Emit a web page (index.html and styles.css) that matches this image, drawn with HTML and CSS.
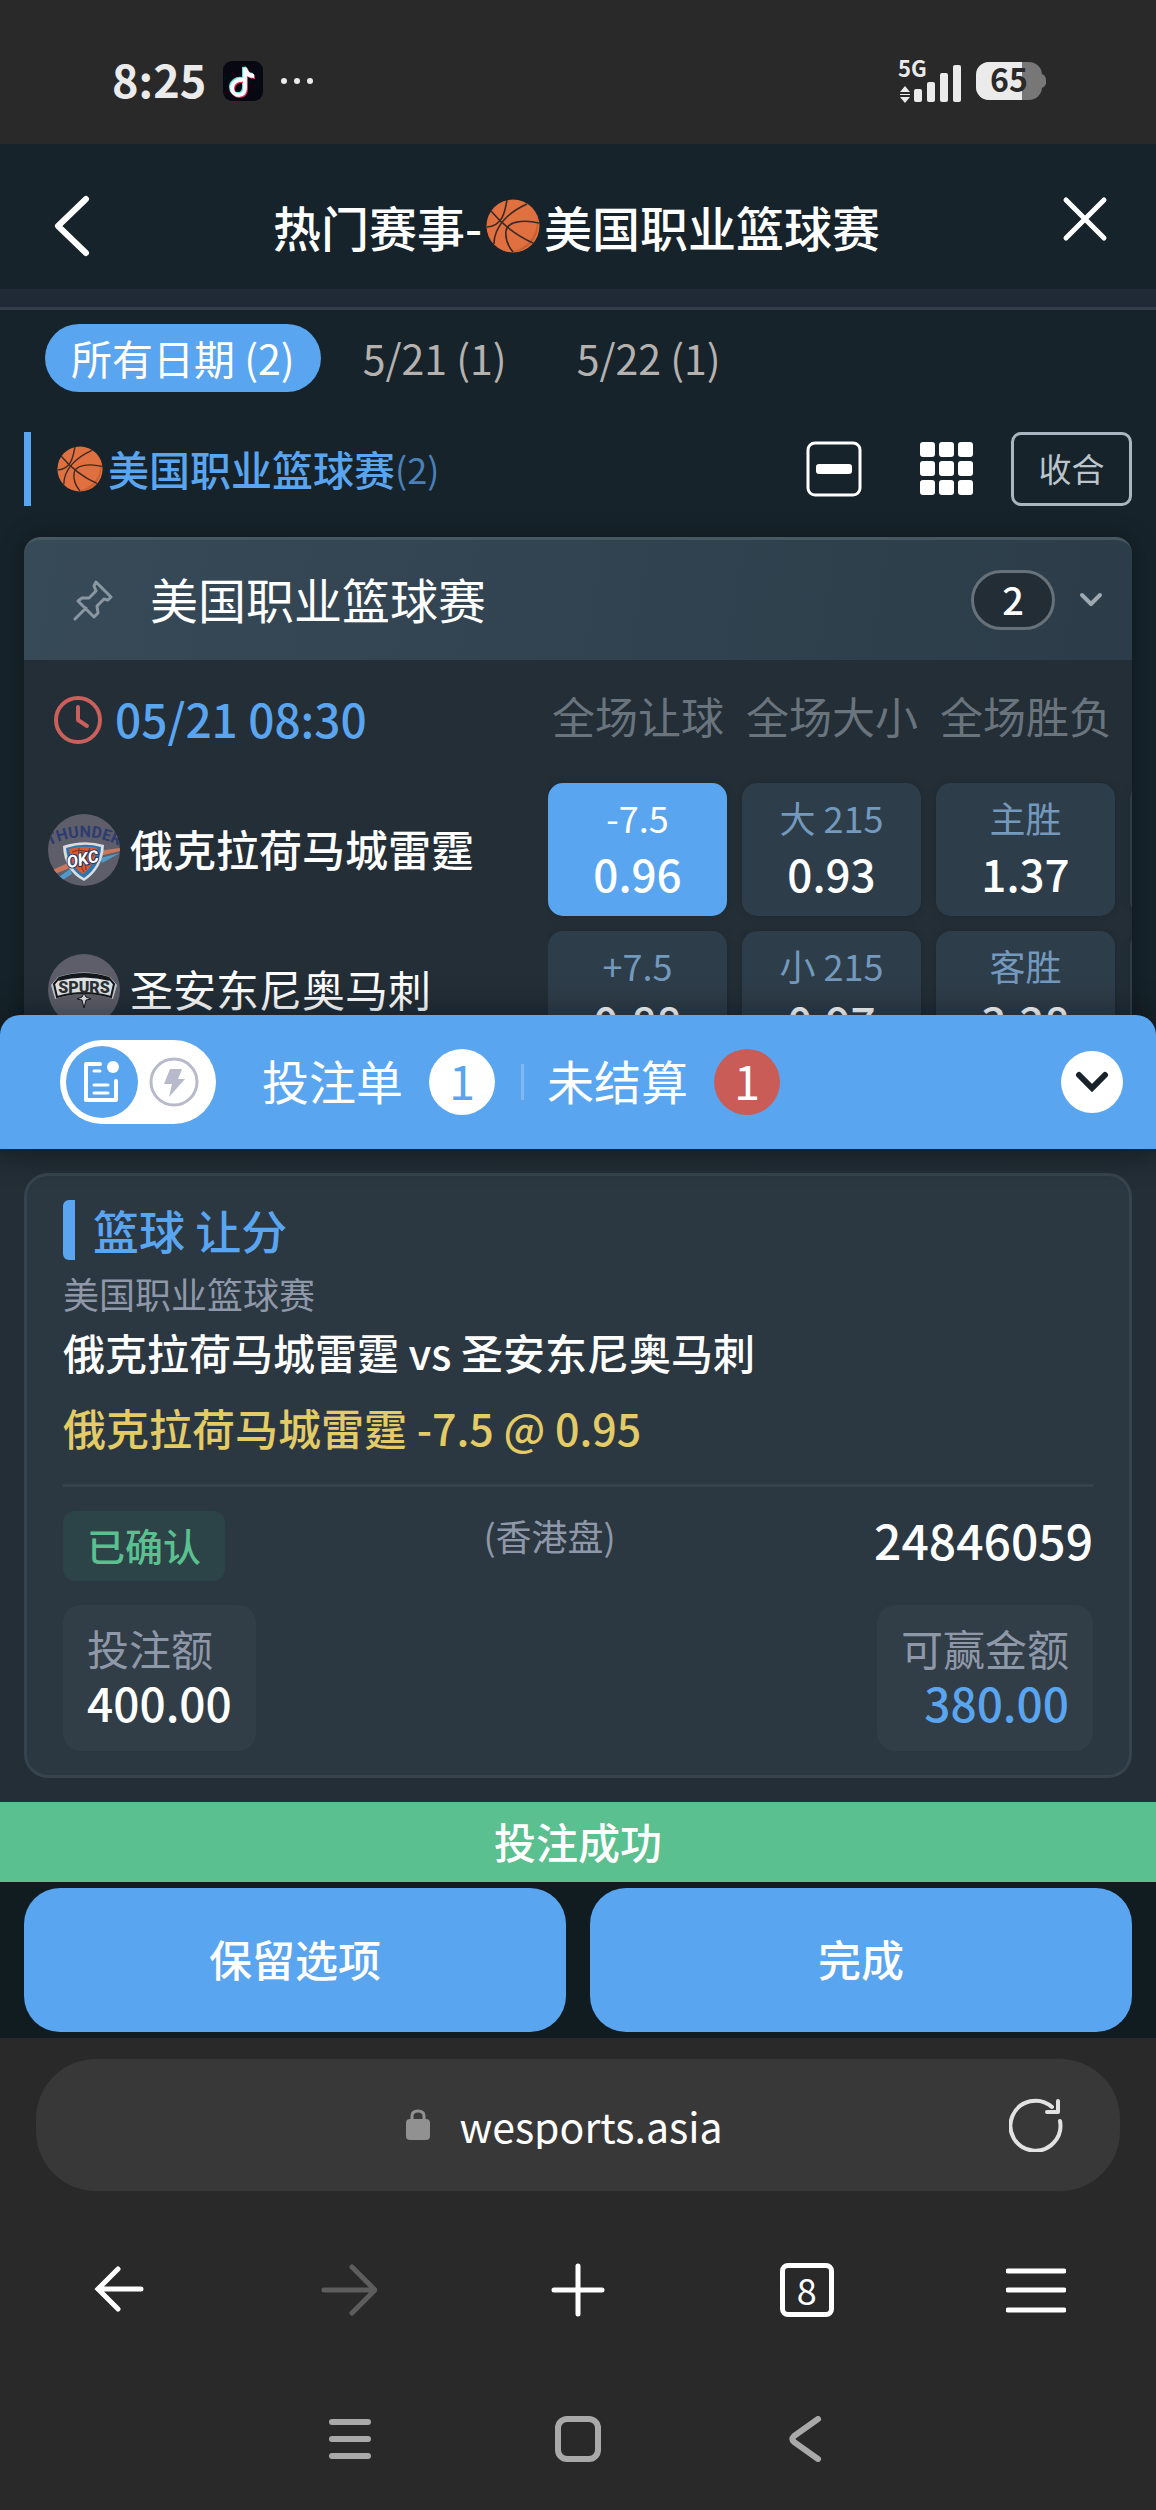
FILE: index.html
```html
<!DOCTYPE html>
<html lang="zh-CN">
<head>
  <meta charset="UTF-8" />
  <meta name="viewport" content="width=device-width, initial-scale=1.0"/>
  <title>热门赛事-美国职业篮球赛</title>
  <link rel="stylesheet" href="styles.css">
</head>
<body>
  <!-- shared icons -->
  <svg width="0" height="0" class="defs" aria-hidden="true">
    <symbol id="ball" viewBox="0 0 54 54">
      <circle cx="27" cy="27" r="26.500" fill="#e0703f"/>
      <path d="M51 17c5 19-8 37-27 36 17-3 29-17 27-36z" fill="#c95f30"/>
      <g fill="none" stroke="#3a2a24" stroke-width="1.600">
        <path d="M21 1C19 12 17 27 1 28"/>
        <path d="M5 12c10 12 24 24 42 32"/>
        <path d="M41 5C23 13 8 27 8 45"/>
        <path d="M53 24C36 20 21 23 20 32c-1 8 2 15 7 21"/>
      </g>
    </symbol>
  </svg>

  <!-- phone status bar -->
  <div class="status-bar">
    <div class="status-left">
      <span class="clock">8:25</span>
      <svg width="40" height="40" viewBox="0 0 40 40">
        <rect width="40" height="40" rx="9" fill="#070812"/>
        <g fill="none" stroke-width="4">
          <path d="M19 18c-6-1-11 3-11 8 0 4 3 7 7 7s6-3 6-7V6c1 5 4 8 9 8" stroke="#4be8e4"/>
          <path d="M21 20c-6-1-11 3-11 8 0 4 3 7 7 7s6-3 6-7V8c1 5 4 8 9 8" stroke="#ee2c54"/>
          <path d="M20 19c-6-1-11 3-11 8 0 4 3 7 7 7s6-3 6-7V7c1 5 4 8 9 8" stroke="#ffffff"/>
        </g>
      </svg>
      <svg width="34" height="8" viewBox="0 0 34 8" fill="#ebebeb">
        <circle cx="4" cy="4" r="3"/><circle cx="17" cy="4" r="3"/><circle cx="30" cy="4" r="3"/>
      </svg>
    </div>
    <div class="status-right">
      <svg width="64" height="44" viewBox="0 0 64 44" fill="#ebebeb">
        <text x="0" y="18" class="net">5G</text>
        <path d="M7 27l5 6H2zM7 44l-5-6h10zM2 35h10v1H2z"/>
        <rect x="16" y="30" width="8" height="13" rx="2"/>
        <rect x="29" y="23" width="8" height="20" rx="2"/>
        <rect x="42" y="14" width="8" height="29" rx="2"/>
        <rect x="55" y="6" width="8" height="37" rx="2"/>
      </svg>
      <svg width="70" height="38" viewBox="0 0 70 38">
        <path d="M65 12c7 0 7 14 0 14z" fill="#777777"/>
        <rect width="66" height="38" rx="13" fill="#777777"/>
        <path d="M13 0h33v38H13A13 13 0 0 1 0 25V13A13 13 0 0 1 13 0z" fill="#ebebeb"/>
        <text x="33" y="30" class="battery">65</text>
      </svg>
    </div>
  </div>

  <header class="topbar">
    <button class="icon-btn" aria-label="返回">
      <svg width="38" height="62" viewBox="0 0 38 62"><path d="M33 4L5 31l28 27" fill="none" stroke="#fff" stroke-width="6" stroke-linecap="round" stroke-linejoin="round"/></svg>
    </button>
    <h1>热门赛事-<svg width="54" height="54"><use href="#ball"/></svg>美国职业篮球赛</h1>
    <button class="icon-btn close" aria-label="关闭">
      <svg width="46" height="46" viewBox="0 0 46 46"><path d="M4 4l38 38M42 4L4 42" stroke="#fff" stroke-width="5" stroke-linecap="round"/></svg>
    </button>
  </header>
  <div class="strip"></div>

  <main class="matches">
    <nav class="dates">
      <button class="active">所有日期 (2)</button>
      <button>5/21 (1)</button>
      <button>5/22 (1)</button>
    </nav>

    <div class="league-bar">
      <h2><svg width="46" height="46"><use href="#ball"/></svg>美国职业篮球赛<small>(2)</small></h2>
      <div class="tools">
        <button class="icon-btn" aria-label="精简">
          <svg width="56" height="56" viewBox="0 0 56 56"><rect x="2" y="2" width="52" height="52" rx="7" fill="none" stroke="#fff" stroke-width="3"/><rect x="10" y="23" width="36" height="10" rx="3" fill="#fff"/></svg>
        </button>
        <button class="icon-btn" aria-label="宫格">
          <svg width="56" height="56" viewBox="0 0 56 56" fill="#fff">
            <rect x="1" y="1" width="15" height="15" rx="3"/><rect x="20" y="1" width="15" height="15" rx="3"/><rect x="39" y="1" width="15" height="15" rx="3"/>
            <rect x="1" y="20" width="15" height="15" rx="3"/><rect x="20" y="20" width="15" height="15" rx="3"/><rect x="39" y="20" width="15" height="15" rx="3"/>
            <rect x="1" y="39" width="15" height="15" rx="3"/><rect x="20" y="39" width="15" height="15" rx="3"/><rect x="39" y="39" width="15" height="15" rx="3"/>
          </svg>
        </button>
        <button class="collapse">收合</button>
      </div>
    </div>

    <section class="league-card">
      <div class="league-head">
        <svg width="42" height="42" viewBox="0 0 42 42"><path d="M24 3l15 15-3 3-4-1-7 7 1 7-4 4L6 22l4-3 7 0 7-7-2-5zM14 29L3 40" fill="none" stroke="#8b97a0" stroke-width="3" stroke-linejoin="round" stroke-linecap="round"/></svg>
        <h3>美国职业篮球赛</h3>
        <span class="count">2</span>
        <svg width="24" height="16" viewBox="0 0 24 16"><path d="M3 3l9 9 9-9" fill="none" stroke="#a0a9b0" stroke-width="4" stroke-linecap="round" stroke-linejoin="round"/></svg>
      </div>

      <div class="match">
        <div class="match-info">
          <div class="match-time">
            <svg width="48" height="48" viewBox="0 0 48 48" fill="none" stroke="#c9605b" stroke-width="4"><circle cx="24" cy="24" r="22"/><path d="M24 11v13l9 6" stroke-linecap="round" stroke-linejoin="round"/></svg>
            <time>05/21 08:30</time>
          </div>
          <div class="team home">
            <svg width="72" height="72" viewBox="0 0 72 72">
              <defs>
                <clipPath id="round"><circle cx="36" cy="36" r="36"/></clipPath>
                <path id="arch" d="M1 32Q36 14 71 32"/>
              </defs>
              <circle cx="36" cy="36" r="36" fill="#5d5e69"/>
              <g clip-path="url(#round)">
                <text class="logo-arch" fill="#2c3b70"><textPath href="#arch" startOffset="50%">THUNDER</textPath></text>
                <path d="M50 37l22-3v3l-20 5zM20 49L2 57l2 4 18-7z" fill="#c9785c"/>
                <path d="M52 44l20-5-18 10zM22 55L8 65l2 4 14-9z" fill="#5199c9"/>
                <path d="M15 32q21-7 41-1-1 24-20 36Q16 57 15 32z" fill="#d8dde4"/>
                <path d="M18 34q18-6 35-1-1 20-17 31Q20 55 18 34z" fill="#2f75ad"/>
                <path d="M21 35q14-4 28-1-2 17-14 26Q23 53 21 35z" fill="#d85a32"/>
                <path d="M24 38q11-5 22 4M31 34q-2 13 5 24M42 34q-6 10-4 22" fill="none" stroke="#7d3328"/>
                <text x="35" y="51" class="logo-okc" transform="rotate(-12 35 47)">OKC</text>
              </g>
            </svg>
            <span>俄克拉荷马城雷霆</span>
          </div>
          <div class="team">
            <svg width="72" height="72" viewBox="0 0 72 72">
              <circle cx="36" cy="36" r="36" fill="#5d5e69"/>
              <path d="M10 23q26-9 52 0l7 8-4 14q-29-10-58 0L3 31z" fill="#bfc6c9"/>
              <path d="M11 24q25-8 50 0l5 6-3 13q-27-8-54 0L6 30z" fill="#dfe3e4" stroke="#15181c" stroke-width="2"/>
              <path d="M12 24q24-8 48 0l2 3q-26-7-52 0z" fill="#15181c"/>
              <path d="M36 39l-2 4-5 2 5 1 2 8 2-8 5-1-5-2z" fill="#dfe3e4" stroke="#15181c"/>
              <text x="36" y="39" class="logo-spurs">SPURS</text>
            </svg>
            <span>圣安东尼奥马刺</span>
          </div>
        </div>

        <div class="markets">
          <span class="market-name">全场让球</span>
          <span class="market-name">全场大小</span>
          <span class="market-name">全场胜负</span>
          <span class="market-name"></span>
          <button class="odd selected"><small>-7.5</small>0.96</button>
          <button class="odd"><small>大 215</small>0.93</button>
          <button class="odd"><small>主胜</small>1.37</button>
          <button class="odd" aria-label="更多"></button>
          <button class="odd"><small>+7.5</small>0.88</button>
          <button class="odd"><small>小 215</small>0.97</button>
          <button class="odd"><small>客胜</small>3.28</button>
          <button class="odd" aria-label="更多"></button>
        </div>
      </div>
    </section>
  </main>

  <!-- bet slip, slides over the match list -->
  <section class="slip">
    <div class="slip-bar">
      <div class="mode">
        <button class="on" aria-label="投注单">
          <svg width="40" height="48" viewBox="0 0 40 48" fill="none" stroke="#fff" stroke-width="4" stroke-linecap="round" stroke-linejoin="round">
            <path d="M18 6H4v36h30V23"/><path d="M12 13h6M12 27h14M12 35h14" stroke-width="3"/><circle cx="31" cy="9" r="6" fill="#fff" stroke="none"/>
          </svg>
        </button>
        <button aria-label="快速投注">
          <svg width="50" height="50" viewBox="0 0 50 50"><circle cx="25" cy="25" r="23" fill="none" stroke="#b8bacb" stroke-width="3"/><path d="M21 12h12l-4 10h7L20 40l3-13h-8z" fill="#b8bacb"/></svg>
        </button>
      </div>
      <a href="#slip" class="slip-tab"><span class="label">投注单</span> <span class="num">1</span></a>
      <a href="#open" class="slip-tab"><span class="label">未结算</span> <span class="num red">1</span></a>
      <button class="fold" aria-label="收起">
        <svg width="34" height="22" viewBox="0 0 34 22"><path d="M4 4l13 13L30 4" fill="none" stroke="#18232b" stroke-width="6" stroke-linecap="round"/></svg>
      </button>
    </div>

    <div class="slip-body">
      <article class="bet">
        <h3>篮球 让分</h3>
        <p class="bet-league">美国职业篮球赛</p>
        <p class="bet-teams">俄克拉荷马城雷霆 vs 圣安东尼奥马刺</p>
        <p class="bet-pick">俄克拉荷马城雷霆 -7.5 @ 0.95</p>
        <div class="bet-state">
          <span class="confirmed">已确认</span>
          <span class="odds-type">(香港盘)</span>
          <span class="bet-id">24846059</span>
        </div>
        <div class="bet-sums">
          <div class="sum">投注额<strong>400.00</strong></div>
          <div class="sum win">可赢金额<strong>380.00</strong></div>
        </div>
      </article>
    </div>

    <div class="success">投注成功</div>
    <div class="actions">
      <button>保留选项</button>
      <button>完成</button>
    </div>
  </section>

  <!-- browser chrome -->
  <footer class="browser">
    <div class="url-bar">
      <div class="address">
        <svg width="24" height="32" viewBox="0 0 24 32"><rect y="10" width="24" height="21" rx="4" fill="#919191"/><path d="M6 12V7q0-5 6-5t6 5v5" fill="none" stroke="#919191" stroke-width="3"/></svg>
        <input type="text" value="wesports.asia" aria-label="网址">
      </div>
      <button class="icon-btn" aria-label="刷新">
        <svg width="54" height="54" viewBox="0 0 54 54" fill="none" stroke="#e2e2e2" stroke-width="4" stroke-linecap="round"><path d="M51 23a25 25 0 1 1-8-14"/><path d="M49 3v11H38" stroke-linejoin="round"/></svg>
      </button>
    </div>
    <nav class="browser-nav">
      <button class="icon-btn" aria-label="后退"><svg width="56" height="56" viewBox="0 0 56 56"><path d="M49 27H6M26 7L6 27l20 20"/></svg></button>
      <button class="icon-btn off" aria-label="前进"><svg width="56" height="56" viewBox="0 0 56 56"><path d="M3 28h51M31 5l23 23-23 23"/></svg></button>
      <button class="icon-btn" aria-label="新标签"><svg width="56" height="56" viewBox="0 0 56 56"><path d="M28 4v48M4 28h48"/></svg></button>
      <button class="icon-btn tabs" aria-label="标签页">8</button>
      <button class="icon-btn" aria-label="菜单"><svg width="60" height="56" viewBox="0 0 60 56"><path d="M2 9h56M2 28h56M2 48h56"/></svg></button>
    </nav>
    <nav class="system-nav">
      <button class="icon-btn" aria-label="任务"><svg width="44" height="46" viewBox="0 0 44 46"><path d="M4 6h36M4 23h36M4 40h36"/></svg></button>
      <button class="icon-btn" aria-label="主页"><svg width="46" height="46" viewBox="0 0 46 46"><rect x="3" y="3" width="40" height="40" rx="9"/></svg></button>
      <button class="icon-btn" aria-label="系统返回"><svg width="46" height="46" viewBox="0 0 46 46"><path d="M35 3L11 20q-3 3 0 6l24 17"/></svg></button>
    </nav>
  </footer>
</body>
</html>
```
FILE: styles.css
```css
:root {
  --blue: #5aa5f0;
  --page: #16232a;
  --panel: #232e37;
  --chrome: #292929;
  --muted: #8f98a8;
  --green: #5ac08f;
}

* {
  box-sizing: border-box;
  margin: 0;
  padding: 0;
}

body {
  font-family: "Noto Sans CJK SC", "Noto Sans", sans-serif;
  background: var(--chrome);
  color: #fff;
  font-size: 42px;
  line-height: 48px;
  overflow-x: hidden;
}

button, input {
  font: inherit;
  color: inherit;
  background: none;
  border: none;
}

button {
  cursor: pointer;
}

svg {
  display: block;
  flex: none;
}

.defs {
  position: absolute;
}

.icon-btn {
  display: flex;
  align-items: center;
  justify-content: center;
}

/* status bar */
.status-bar {
  display: flex;
  justify-content: space-between;
  height: 144px;
  padding: 18px 110px 0 112px;
}

.status-left, .status-right {
  display: flex;
  align-items: center;
  gap: 17px;
}

.status-right {
  gap: 14px;
}

.clock {
  padding-bottom: 4px;
  font-size: 45px;
  font-weight: 700;
  color: #ebebeb;
}

.net {
  font-size: 22px;
  font-weight: 700;
}

.battery {
  font-size: 32px;
  font-weight: 700;
  text-anchor: middle;
  fill: #292929;
}

/* page header */
.topbar {
  display: flex;
  align-items: center;
  justify-content: space-between;
  height: 145px;
  padding: 18px 48px 0 53px;
  background: var(--page);
}

.topbar h1 {
  display: flex;
  align-items: center;
  font-size: 48px;
  font-weight: 500;
  line-height: 56px;
}

.topbar h1 svg {
  margin: 0 4px;
}

.close {
  padding-bottom: 14px;
}

.strip {
  height: 21px;
  background: #1f2a36;
  border-bottom: 3px solid #323d47;
}

.matches {
  background: var(--page);
  padding: 14px 24px 0;
}

.dates {
  display: flex;
  gap: 14px;
  padding-left: 21px;
}

.dates button {
  height: 68px;
  padding: 0 28px 2px;
  border-radius: 34px;
  font-size: 41px;
  color: #b5b1ae;
}

.dates .active {
  padding: 0 26px 2px;
  background: var(--blue);
  color: #fff;
}

.league-bar {
  display: flex;
  align-items: center;
  justify-content: space-between;
  height: 74px;
  margin: 40px 0 31px;
  border-left: 7px solid var(--blue);
}

.league-bar h2 {
  display: flex;
  align-items: center;
  padding: 0 0 3px 26px;
  font-size: 41px;
  font-weight: 500;
  color: var(--blue);
}

.league-bar h2 svg {
  margin: 3px 5px 0 0;
}

.league-bar small {
  font-size: 36px;
  font-weight: 400;
  color: #4a80b8;
}

.tools {
  display: flex;
  align-items: center;
}

.tools .icon-btn {
  margin-right: 57px;
}

.tools .icon-btn + .icon-btn {
  margin-right: 36px;
}

.collapse {
  width: 121px;
  height: 74px;
  padding-bottom: 3px;
  border: 3px solid #a9b6bf;
  border-radius: 10px;
  font-size: 33px;
  color: #bcc5cb;
}

/* league card */
.league-card {
  background: var(--panel);
  border-radius: 16px 16px 0 0;
  box-shadow: 0 0 24px rgba(0, 0, 0, 0.3);
  overflow: hidden;
}

.league-head {
  display: flex;
  align-items: center;
  height: 123px;
  padding: 0 29px 0 48px;
  border-top: 3px solid #465862;
  border-radius: 16px 16px 0 0;
  background: linear-gradient(100deg, #374a58, #2c3c49);
}

.league-head h3 {
  flex: 1;
  padding: 0 0 5px 36px;
  font-size: 48px;
  font-weight: 400;
}

.count {
  width: 84px;
  height: 60px;
  margin-right: 24px;
  border: 3px solid #66717a;
  border-radius: 30px;
  background: #222d36;
  font-size: 38px;
  font-weight: 500;
  line-height: 52px;
  text-align: center;
}

.match {
  display: grid;
  grid-template-columns: minmax(0, 1fr) 584px;
}

.match-info {
  padding-left: 24px;
}

.match-time {
  display: flex;
  align-items: center;
  gap: 13px;
  height: 120px;
  padding-left: 6px;
  font-size: 46px;
  font-weight: 500;
  color: var(--blue);
}

.match-time time, .team span {
  padding-bottom: 5px;
}

.team {
  display: flex;
  align-items: center;
  gap: 10px;
  height: 140px;
  font-size: 43px;
}

.home {
  font-weight: 500;
}

.logo-arch {
  font: 700 16px "Roboto", sans-serif;
  text-anchor: middle;
}

.logo-okc {
  font: italic 700 17px "Roboto", sans-serif;
  text-anchor: middle;
  fill: #fff;
  stroke: #26325c;
  stroke-width: 2px;
  paint-order: stroke;
}

.logo-spurs {
  font: 900 16px "Roboto", sans-serif;
  text-anchor: middle;
  fill: #2b3035;
}

.markets {
  display: grid;
  grid-template-columns: repeat(4, 179px);
  grid-template-rows: 108px 133px 133px;
  gap: 15px;
  overflow: hidden;
}

.market-name {
  padding: 31px 0 0 4px;
  font-size: 43px;
  color: #69747d;
  white-space: nowrap;
}

.odd {
  display: flex;
  flex-direction: column;
  align-items: center;
  justify-content: center;
  gap: 8px;
  padding-bottom: 9px;
  border-radius: 15px;
  background: #2e3d4a;
  box-shadow: 0 0 8px rgba(0, 0, 0, 0.15);
  font-size: 44px;
  font-weight: 500;
}

.odd small {
  font-size: 36px;
  font-weight: 400;
  color: #7399bd;
}

.selected {
  background: var(--blue);
}

.selected small {
  color: #fff;
}

/* bet slip */
.slip {
  position: relative;
  z-index: 1;
  margin-top: -49px;
}

.slip-bar {
  position: relative;
  display: flex;
  align-items: center;
  height: 134px;
  padding: 0 33px 0 60px;
  border-radius: 20px 20px 0 0;
  background: var(--blue);
  box-shadow: 0 0 36px rgba(0, 0, 0, 0.4);
}

.mode {
  display: flex;
  align-items: center;
  gap: 11px;
  width: 156px;
  height: 84px;
  margin-right: 46px;
  padding-left: 6px;
  border-radius: 42px;
  background: #fff;
}

.mode .on {
  display: flex;
  align-items: center;
  justify-content: center;
  width: 72px;
  height: 72px;
  border-radius: 50%;
  background: var(--blue);
}

.slip-tab {
  display: flex;
  align-items: center;
  gap: 26px;
  color: #fff;
  font-size: 47px;
  text-decoration: none;
}

.slip-tab + .slip-tab::before {
  content: "";
  width: 3px;
  height: 36px;
  margin-left: 26px;
  background: #7fb9f3;
}

.label {
  padding-bottom: 5px;
}

.slip-tab + .slip-tab .label {
  margin-left: -3px;
}

.num {
  width: 66px;
  height: 66px;
  border-radius: 50%;
  background: #fff;
  color: var(--blue);
  line-height: 62px;
  text-align: center;
}

.red {
  background: #c95c57;
  color: #fff;
}

.fold {
  display: flex;
  align-items: center;
  justify-content: center;
  width: 62px;
  height: 62px;
  margin-left: auto;
  border-radius: 50%;
  background: #fff;
}

.slip-body {
  padding: 24px;
  background: linear-gradient(#1f2a32, var(--panel) 30px);
}

.bet {
  padding: 24px 36px;
  border: 3px solid #37444d;
  border-radius: 24px;
  background: #2b3741;
}

.bet h3 {
  padding-left: 18px;
  border-left: 12px solid var(--blue);
  border-radius: 6px 0 0 6px;
  font-size: 46px;
  font-weight: 500;
  line-height: 58px;
  padding-bottom: 2px;
  color: var(--blue);
}

.bet-league {
  margin-top: 9px;
  font-size: 36px;
  color: var(--muted);
}

.bet-teams {
  margin-top: 11px;
  font-weight: 500;
}

.bet-pick {
  padding: 27px 0 33px;
  border-bottom: 3px solid #35414b;
  font-size: 43px;
  font-weight: 500;
  color: #e3cb66;
}

.bet-state {
  display: flex;
  align-items: flex-start;
  justify-content: space-between;
  margin: 24px 0;
}

.confirmed {
  padding: 0 24px 2px;
  border-radius: 12px;
  background: #2c4347;
  color: var(--green);
  font-size: 38px;
  font-weight: 500;
  line-height: 68px;
}

.odds-type {
  font-size: 36px;
  color: var(--muted);
}

.bet-id {
  padding-top: 4px;
  font-size: 48px;
  font-weight: 500;
}

.bet-sums {
  display: flex;
  justify-content: space-between;
}

.sum {
  padding: 16px 24px 22px;
  border-radius: 18px;
  background: #313d47;
  color: var(--muted);
  line-height: 54px;
}

.sum strong {
  display: block;
  color: #fff;
  font-size: 46px;
  font-weight: 500;
}

.win {
  text-align: right;
}

.win strong {
  color: var(--blue);
}

.success {
  background: var(--green);
  padding-bottom: 2px;
  font-weight: 500;
  line-height: 78px;
  text-align: center;
}

.actions {
  display: grid;
  grid-template-columns: 1fr 1fr;
  gap: 24px;
  padding: 6px 24px;
  background: #111c21;
}

.actions button {
  height: 144px;
  padding-bottom: 4px;
  border-radius: 36px;
  background: var(--blue);
  font-size: 43px;
  font-weight: 500;
}

/* browser chrome */
.browser {
  padding-top: 21px;
}

.url-bar {
  display: flex;
  align-items: center;
  height: 132px;
  margin: 0 36px;
  padding: 0 57px 0 90px;
  border-radius: 60px;
  background: #383838;
}

.address {
  display: flex;
  flex: 1;
  align-items: center;
  justify-content: center;
  gap: 30px;
}

.address input {
  width: 270px;
  font-size: 41px;
}

.browser-nav {
  display: grid;
  grid-template-columns: repeat(5, 1fr);
  justify-items: center;
  height: 198px;
  padding: 0 6px;
  align-items: center;
  fill: none;
  stroke: #fff;
  stroke-width: 5;
  stroke-linecap: round;
}

.off {
  stroke: #5d5d5d;
}

.tabs {
  width: 54px;
  height: 54px;
  padding-bottom: 3px;
  border: 5px solid #fff;
  border-radius: 8px;
  font-size: 36px;
}

.system-nav {
  display: grid;
  grid-template-columns: repeat(3, 228px);
  justify-content: center;
  justify-items: center;
  padding: 27px 0 48px;
  fill: none;
  stroke: #a9a9a9;
  stroke-width: 6;
  stroke-linecap: round;
}
```
